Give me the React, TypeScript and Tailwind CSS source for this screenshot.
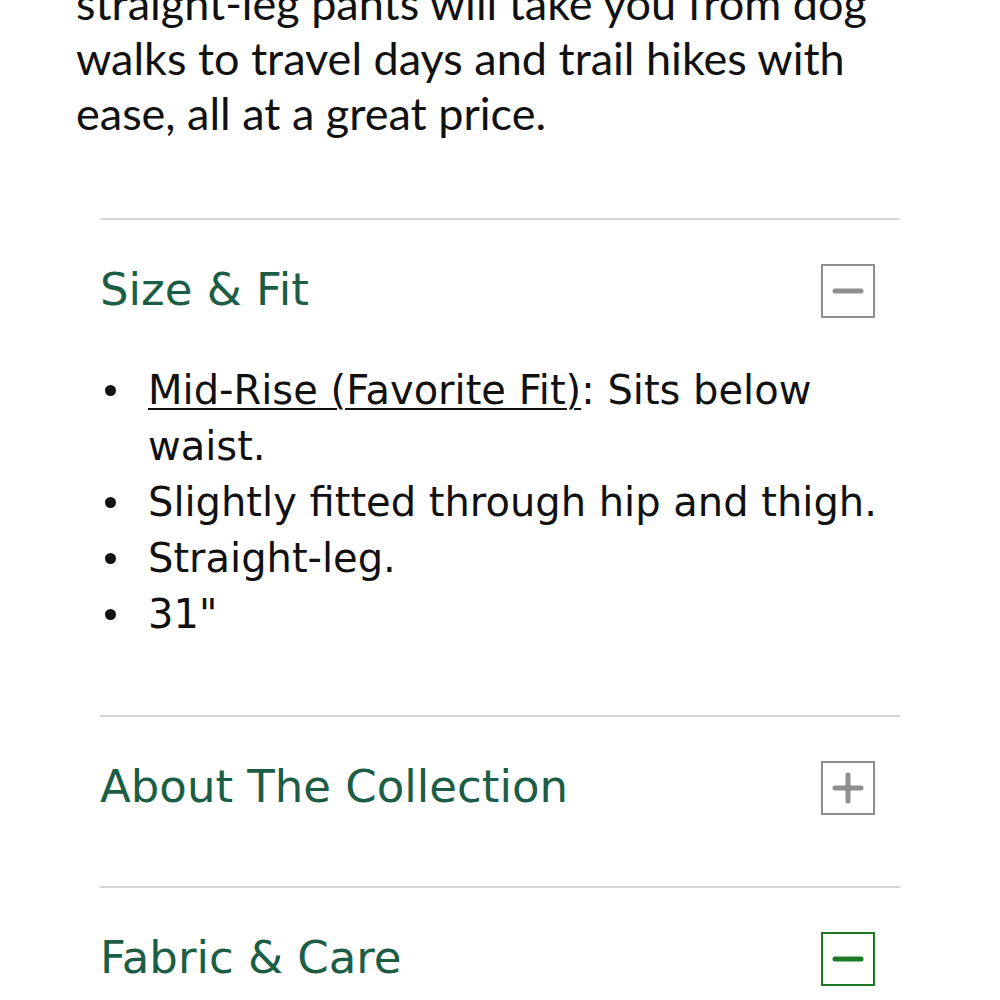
const fitItems = [
  { link: "Mid-Rise (Favorite Fit)", rest: ": Sits below waist." },
  { rest: "Slightly fitted through hip and thigh." },
  { rest: "Straight-leg." },
  { rest: '31"' },
];

function ToggleBox({ open, active }: { open: boolean; active?: boolean }) {
  const color = active ? "#1b7a24" : "#8f8f8f";
  return (
    <span
      className="w-[54px] h-[54px] flex items-center justify-center border-2 shrink-0"
      style={{ borderColor: color }}
    >
      <svg width="32" height="32" viewBox="0 0 32 32">
        <line x1="3" y1="16" x2="29" y2="16" stroke={color} strokeWidth="5" strokeLinecap="round" />
        {!open && (
          <line x1="16" y1="3" x2="16" y2="29" stroke={color} strokeWidth="5" strokeLinecap="round" />
        )}
      </svg>
    </span>
  );
}

function SectionHeader({ title, open, active }: { title: string; open: boolean; active?: boolean }) {
  return (
    <div className="h-[142px] flex items-center justify-between pr-[25px]">
      <h2 className="text-[45px] leading-none text-[#1b5e45] font-['DejaVu_Sans',sans-serif] pb-[3px]">
        {title}
      </h2>
      <ToggleBox open={open} active={active} />
    </div>
  );
}

export default function App() {
  return (
    <div className="w-[1000px] h-[1000px] overflow-hidden bg-white px-[76px]">
      <p className="mt-[-24px] text-[45px] leading-[55px] text-[#111] font-['Lato',sans-serif] whitespace-nowrap">
        straight-leg pants will take you from dog
        <br />
        walks to travel days and trail hikes with
        <br />
        ease, all at a great price.
      </p>

      <div className="mx-6 mt-[77px]">
        <div className="border-t-2 border-[#d6d6d6]">
          <SectionHeader title="Size & Fit" open />
          <ul className="pb-[73px] font-['DejaVu_Sans',sans-serif] text-[40px] leading-[56px] text-[#111]">
            {fitItems.map((item) => (
              <li key={item.rest} className="flex">
                <span className="w-[48px] shrink-0 flex justify-start pl-[5px] pt-[23px]">
                  <span className="w-[11px] h-[11px] rounded-full bg-[#111]" />
                </span>
                <span>
                  {item.link && <span className="underline decoration-2 underline-offset-4">{item.link}</span>}
                  {item.rest}
                </span>
              </li>
            ))}
          </ul>
        </div>

        <div className="border-t-2 border-[#d6d6d6] pb-[27px]">
          <SectionHeader title="About The Collection" open={false} />
        </div>

        <div className="border-t-2 border-[#d6d6d6]">
          <SectionHeader title="Fabric & Care" open active />
        </div>
      </div>
    </div>
  );
}
